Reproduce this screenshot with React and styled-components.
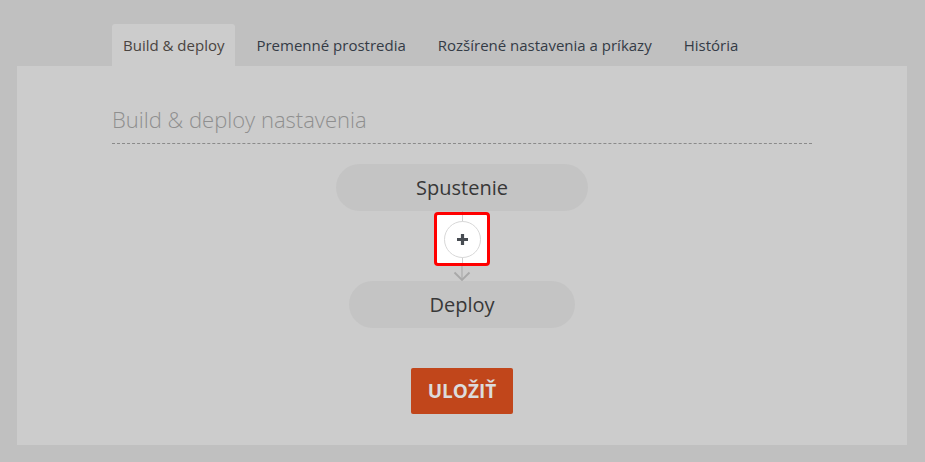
import React from "react";
import styled, { createGlobalStyle } from "styled-components";

/* Build & deploy settings — dimmed tour step with the "add" button highlighted */

const GlobalStyle = createGlobalStyle`
  html, body {
    margin: 0;
    padding: 0;
    background: #c0c0c0;
    font-family: "Open Sans", "Noto Sans", sans-serif;
  }
`;

const Page = styled.div`
  padding: 24px 18px 17px 17px;
`;

const TabBar = styled.div`
  width: 700px;
  margin: 0 auto;
  display: flex;
  gap: 10px;
  height: 42px;
`;

const Tab = styled.div`
  display: flex;
  align-items: center;
  padding: 0 11px;
  font-size: 15px;
  color: ${({ $active }) => ($active ? "#4a4440" : "#343b46")};
  background: ${({ $active }) => ($active ? "#cccccc" : "transparent")};
  border-radius: 3px 3px 0 0;
  cursor: pointer;
  white-space: nowrap;
`;

const Panel = styled.div`
  background: #cccccc;
  padding: 38px 0 31px;
  display: flex;
  flex-direction: column;
  align-items: center;
`;

const Heading = styled.h2`
  width: 700px;
  margin: 0;
  padding-bottom: 9px;
  border-bottom: 1px dashed #8a8a8a;
  font-size: 22px;
  font-weight: 300;
  line-height: 30px;
  color: #8f8f8f;
`;

const Step = styled.div`
  width: ${({ $w }) => $w}px;
  height: 47px;
  border-radius: 24px;
  background: #c4c4c4;
  display: flex;
  align-items: center;
  justify-content: center;
  font-size: 20px;
  color: #383838;
  margin-top: ${({ $mt }) => $mt || 0}px;
`;

const Connector = styled.div`
  display: flex;
  flex-direction: column;
  align-items: center;
`;

const Stem = styled.div`
  width: 1px;
  height: 1px;
  background: #b8b8b8;
`;

const Highlight = styled.div`
  position: relative;
  box-sizing: border-box;
  width: 56px;
  height: 54px;
  border: 3px solid #ff0000;
  border-radius: 4px;
  background: #ffffff;
  display: flex;
  align-items: center;
  justify-content: center;

  &::before {
    content: "";
    position: absolute;
    top: 0;
    bottom: 0;
    left: 50%;
    width: 1px;
    background: #cfcfcf;
  }
`;

const AddButton = styled.button`
  position: relative;
  z-index: 1;
  box-sizing: border-box;
  width: 37px;
  height: 37px;
  border-radius: 50%;
  border: 1px solid #d8d8d8;
  background: #ffffff;
  display: flex;
  align-items: center;
  justify-content: center;
  padding: 0;
  cursor: pointer;
`;

const SaveButton = styled.button`
  margin-top: 40px;
  width: 102px;
  height: 46px;
  border: none;
  border-radius: 2px;
  background: #c1461b;
  color: #dcdcdc;
  font-family: "Open Sans", "Noto Sans", sans-serif;
  font-weight: 700;
  font-size: 19px;
  cursor: pointer;
`;

const tabs = [
  "Build & deploy",
  "Premenné prostredia",
  "Rozšírené nastavenia a príkazy",
  "História",
];

export default function App() {
  return (
    <>
      <GlobalStyle />
      <Page>
        <TabBar>
          {tabs.map((t, i) => (
            <Tab key={t} $active={i === 0}>{t}</Tab>
          ))}
        </TabBar>
        <Panel>
          <Heading>Build &amp; deploy nastavenia</Heading>
          <Step $w={252} $mt={20}>Spustenie</Step>
          <Connector>
            <Stem />
            <Highlight>
              <AddButton aria-label="Pridať krok">
                <svg width="13" height="13" viewBox="0 0 13 13">
                  <path d="M6.5 1v11M1 6.5h11" stroke="#474c52" strokeWidth="3.2" />
                </svg>
              </AddButton>
            </Highlight>
            <svg width="20" height="15" viewBox="0 0 20 15">
              <path d="M10 0v14" stroke="#b0b0b0" strokeWidth="1.4" />
              <path d="M2.5 6.5L10 14l7.5-7.5" fill="none" stroke="#a8a8a8" strokeWidth="1.8" />
            </svg>
          </Connector>
          <Step $w={226}>Deploy</Step>
          <SaveButton>ULOŽIŤ</SaveButton>
        </Panel>
      </Page>
    </>
  );
}
